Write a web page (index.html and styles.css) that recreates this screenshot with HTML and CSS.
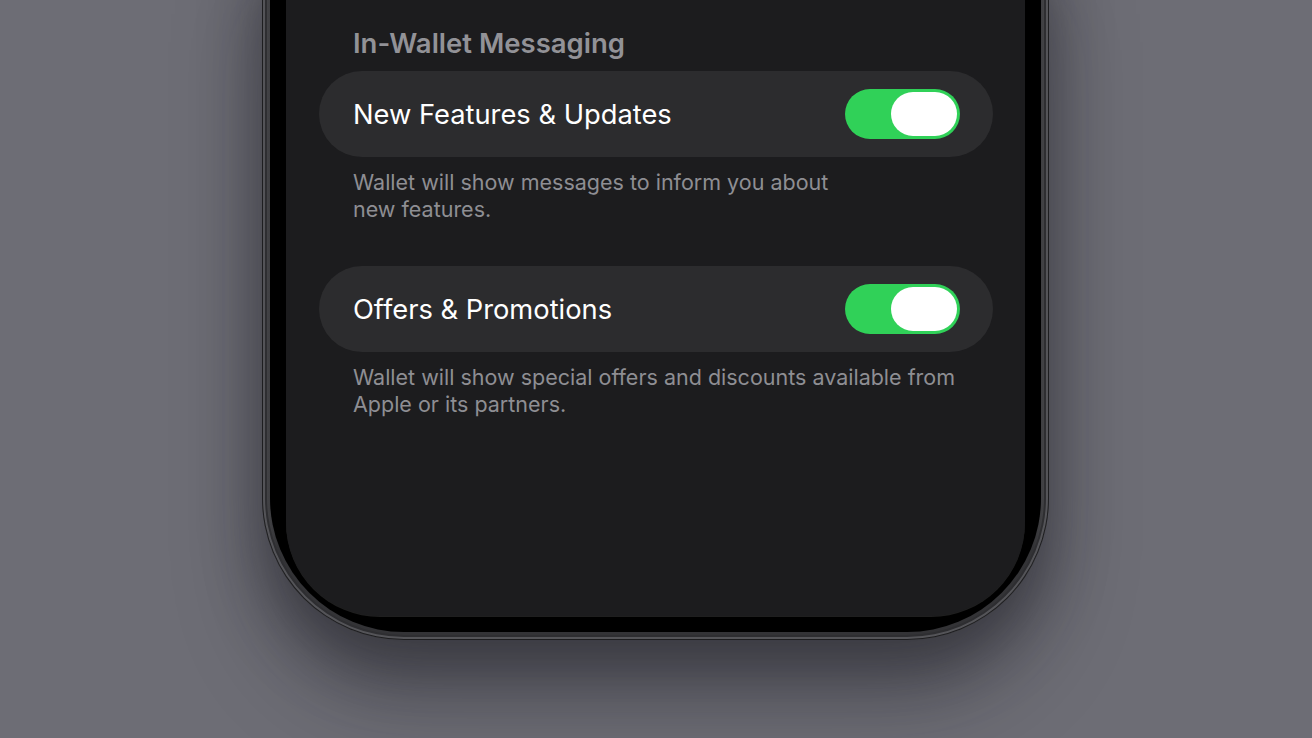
FILE: index.html
```html
<!DOCTYPE html>
<html lang="en">
<head>
  <meta charset="UTF-8" />
  <meta name="viewport" content="width=device-width, initial-scale=1.0" />
  <title>Wallet Settings</title>
  <link rel="stylesheet" href="styles.css">
</head>
<body>
  <div class="phone">
    <div class="bezel">
      <div class="screen">
        <h3 class="group-title">In-Wallet Messaging</h3>

        <div class="row">
          <span class="row-label">New Features &amp; Updates</span>
          <div class="toggle on"><div class="knob"></div></div>
        </div>
        <p class="footer">Wallet will show messages to inform you about<br>new features.</p>

        <div class="row">
          <span class="row-label">Offers &amp; Promotions</span>
          <div class="toggle on"><div class="knob"></div></div>
        </div>
        <p class="footer">Wallet will show special offers and discounts available from<br>Apple or its partners.</p>
      </div>
    </div>
  </div>
</body>
</html>
```

FILE: styles.css
```css
body {
  margin: 0;
  padding: 0;
  height: 738px;
  overflow: hidden;
  font-family: 'Inter', 'Noto Sans', sans-serif;
  background: #6d6d75;
}
.phone {
  width: 787px;
  height: 700px;
  margin: -60px 0 0 262px;
  box-sizing: border-box;
  padding: 0 8px 8px;
  border-radius: 0 0 142px 142px;
  background: linear-gradient(to right, #4a4a4d, #333336 2%, #333336 98%, #4a4a4d);
  box-shadow:
    inset 0 0 0 1px #1e1e20,
    inset 0 0 0 3px #545458,
    inset 0 0 0 5px #2e2e31,
    0 30px 60px rgba(20, 20, 26, 0.45),
    0 60px 90px rgba(20, 20, 26, 0.25);
}
.bezel {
  height: 100%;
  box-sizing: border-box;
  padding: 0 16px 16px;
  background: #000;
  border-radius: 0 0 134px 134px;
}
.screen {
  height: 100%;
  box-sizing: border-box;
  padding: 86px 32px 0 33px;
  background: #1c1c1e;
  border-radius: 0 0 94px 94px;
  box-shadow: 0 1px 0 rgba(255, 255, 255, 0.12);
}
.group-title {
  margin: 0 0 11px 34px;
  font-size: 27.5px;
  font-weight: 600;
  line-height: 34px;
  color: #929297;
}
.row {
  height: 86px;
  display: flex;
  align-items: center;
  justify-content: space-between;
  padding: 0 33px 0 34px;
  border-radius: 43px;
  background: #2c2c2e;
}
.row-label {
  font-size: 27.3px;
  color: #fff;
}
.toggle {
  width: 115px;
  height: 50px;
  box-sizing: border-box;
  padding: 3px;
  border-radius: 25px;
  display: flex;
  background: #39393d;
}
.toggle.on {
  justify-content: flex-end;
  background: #30d158;
}
.knob {
  width: 66px;
  height: 44px;
  border-radius: 22px;
  background: #fff;
}
.footer {
  margin: 12px 0 43px 34px;
  font-size: 21.5px;
  line-height: 27px;
  color: #8e8e93;
}
```
